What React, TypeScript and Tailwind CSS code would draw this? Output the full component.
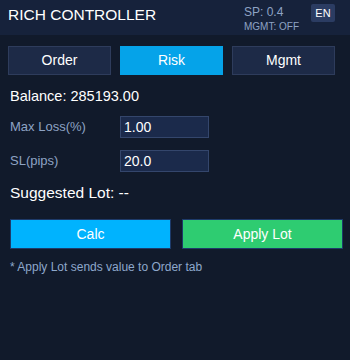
export default function App() {
	const tabs = ["Order", "Risk", "Mgmt"];
	const active = "Risk";

	return (
		<div className="w-[350px] h-[360px] bg-[#111a2b] text-white font-['Liberation_Sans',Arial,sans-serif]">
			<div className="h-[35px] bg-[#16223b] flex items-start justify-between pl-2 pr-[15px]">
				<h1 className="text-[15.5px] leading-[18px] mt-[6px]">RICH CONTROLLER</h1>
				<div className="flex items-start gap-[12px]">
					<div className="flex flex-col leading-none mt-[6px]">
						<span className="text-[12px] text-[#8ea3c4]">SP: 0.4</span>
						<span className="text-[10px] text-[#8ea3c4] mt-[4px]">MGMT: OFF</span>
					</div>
					<div className="w-[24px] h-[18px] mt-[4px] rounded-[2px] bg-[#2b3c62] text-[11px] flex items-center justify-center">EN</div>
				</div>
			</div>

			<div className="pl-2 pt-[11px]">
				<div className="flex gap-[9px]">
					{tabs.map((t) => (
						<button
							key={t}
							className={
								t === active
									? "w-[103px] h-[29px] bg-[#05a3e9] border border-[#05a3e9] text-[14px]"
									: "w-[103px] h-[29px] bg-[#1d2a47] border border-[#2e3c5c] text-[14px]"
							}
						>
							{t}
						</button>
					))}
				</div>

				<div className="pl-[2px] pt-[12px]">
					<p className="text-[14.5px] leading-[18px]">Balance: 285193.00</p>

					<div className="flex items-center mt-[11px]">
						<label className="w-[110px] text-[13px] text-[#8ea3c4]">Max Loss(%)</label>
						<input
							defaultValue="1.00"
							className="w-[89px] h-[22px] bg-[#1b2a4b] border border-[#34466c] text-[14px] px-[3px] outline-none"
						/>
					</div>
					<div className="flex items-center mt-[12px]">
						<label className="w-[110px] text-[13px] text-[#8ea3c4]">SL(pips)</label>
						<input
							defaultValue="20.0"
							className="w-[89px] h-[22px] bg-[#1b2a4b] border border-[#34466c] text-[14px] px-[3px] outline-none"
						/>
					</div>

					<p className="text-[15.5px] mt-[11px] leading-[20px]">Suggested Lot: --</p>

					<div className="flex gap-[11px] mt-[16px]">
						<button className="w-[161px] h-[30px] bg-[#00b3fe] border border-[#1d3a6a] text-[14px]">Calc</button>
						<button className="w-[161px] h-[30px] bg-[#2ecc71] border border-[#1d3a6a] text-[14px]">Apply Lot</button>
					</div>

					<p className="text-[12px] text-[#8ea8cc] mt-[9px]">* Apply Lot sends value to Order tab</p>
				</div>
			</div>
		</div>
	);
}
